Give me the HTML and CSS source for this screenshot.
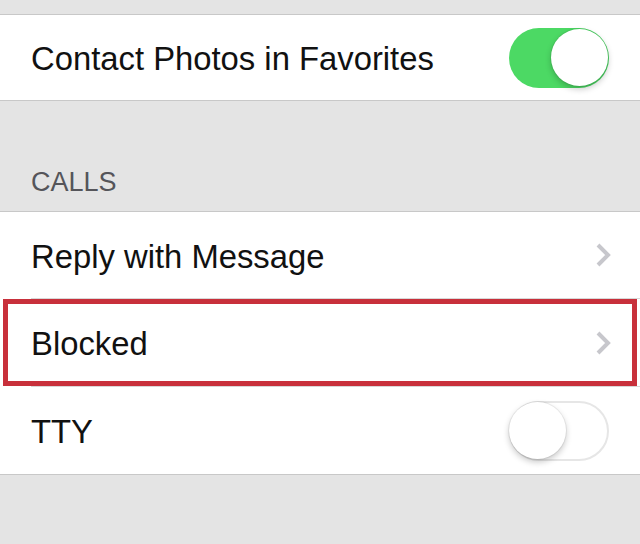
FILE: index.html
```html
<!DOCTYPE html>
<html>
<head>
<meta charset="utf-8">
<link rel="stylesheet" href="styles.css">
</head>
<body>
<div class="screen">
  <div class="top-gap"></div>
  <div class="group">
    <div class="row row-first">
      <span class="label">Contact Photos in Favorites</span>
      <span class="switch on"><span class="knob"></span></span>
    </div>
  </div>
  <div class="section-header"><span>CALLS</span></div>
  <div class="group">
    <div class="row row-reply">
      <span class="label">Reply with Message</span>
      <svg class="chevron" viewBox="0 0 16 26" width="16" height="26"><path d="M3 3 L13 13 L3 23" fill="none" stroke="#c7c7cc" stroke-width="4" stroke-linecap="butt" stroke-linejoin="miter"/></svg>
    </div>
    <div class="row sep highlighted">
      <span class="label">Blocked</span>
      <svg class="chevron" viewBox="0 0 16 26" width="16" height="26"><path d="M3 3 L13 13 L3 23" fill="none" stroke="#c7c7cc" stroke-width="4" stroke-linecap="butt" stroke-linejoin="miter"/></svg>
      <span class="highlight-box"></span>
    </div>
    <div class="row sep">
      <span class="label">TTY</span>
      <span class="switch off"><span class="knob"></span></span>
    </div>
  </div>
</div>
</body>
</html>
```

FILE: styles.css
```css
html, body {
  margin: 0;
  padding: 0;
}
body {
  background: #e4e4e4;
  font-family: "Liberation Sans", Arial, sans-serif;
}
.screen {
  width: 640px;
  height: 544px;
  overflow: hidden;
}
.top-gap {
  height: 14px;
}
.group {
  background: #ffffff;
  border-top: 1px solid #c8c8c8;
  border-bottom: 1px solid #c8c8c8;
}
.row {
  position: relative;
  height: 87px;
  display: flex;
  align-items: center;
  justify-content: space-between;
  padding: 0 31px;
}
.row-first {
  height: 85px;
}
.row-reply {
  height: 86px;
}
.row.sep::before {
  content: "";
  position: absolute;
  left: 31px;
  right: 0;
  top: -1px;
  height: 1px;
  background: #d8d8d8;
}
.row.sep {
  margin-top: 1px;
}
.label {
  font-size: 32.8px;
  color: #111;
  line-height: 1;
  padding-top: 4px;
}
.section-header {
  height: 110px;
  display: flex;
  align-items: flex-end;
  padding: 0 31px 15px;
  box-sizing: border-box;
}
.section-header span {
  font-size: 27px;
  line-height: 1;
  color: #55555a;
}
.switch {
  position: relative;
  width: 100px;
  height: 60px;
  border-radius: 30px;
  box-sizing: border-box;
  flex: none;
}
.switch.on {
  background: #4cd964;
}
.switch.off {
  background: #fff;
  border: 2px solid #e6e6e6;
}
.knob {
  position: absolute;
  top: 1.5px;
  width: 57px;
  height: 57px;
  border-radius: 50%;
  background: #fff;
  box-shadow: 0 3px 6px rgba(0,0,0,0.22), 0 0 0 1px rgba(0,0,0,0.06);
}
.switch.on .knob {
  right: 1.5px;
}
.switch.off .knob {
  top: -0.5px;
  left: -2px;
}
.chevron {
  flex: none;
  margin-right: -2px;
}
.highlight-box {
  position: absolute;
  left: 3px;
  right: 3px;
  top: 0;
  bottom: 0;
  border: 5px solid #c8303b;
  pointer-events: none;
}
```
